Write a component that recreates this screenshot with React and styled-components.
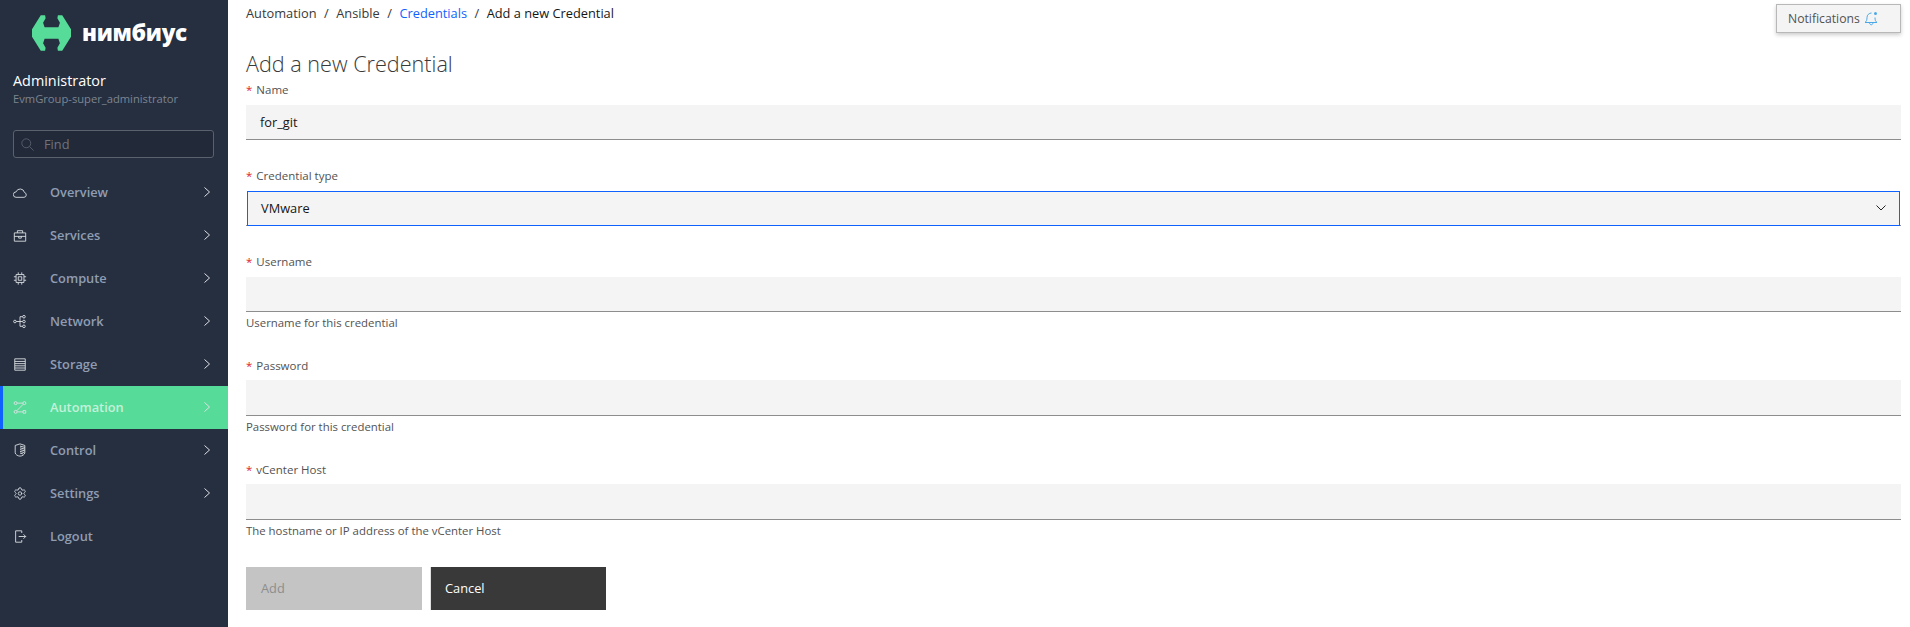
import styled, { createGlobalStyle } from 'styled-components';
import { Settings } from 'lucide-react';

const GlobalStyle = createGlobalStyle`
  html, body {
    margin: 0;
    padding: 0;
    background: #fff;
    font-family: "Open Sans", sans-serif;
  }
`;

const Page = styled.div`
  display: flex;
  width: 100%;
  height: 627px;
  overflow: hidden;
  position: relative;
`;

const Sidebar = styled.aside`
  width: 228px;
  flex-shrink: 0;
  background: #262f40;
  display: flex;
  flex-direction: column;
`;

const Brand = styled.div`
  display: flex;
  align-items: center;
  gap: 11px;
  height: 66px;
  padding-left: 32px;
`;

const BrandName = styled.span`
  color: #fff;
  font-size: 22.5px;
  font-weight: 800;
  letter-spacing: -0.3px;
  line-height: 1;
`;

const UserBlock = styled.div`
  padding: 5px 13px 0;
`;

const UserName = styled.div`
  color: #fff;
  font-size: 14.4px;
  line-height: 20px;
`;

const UserRole = styled.div`
  color: #7d8591;
  font-size: 11.2px;
  line-height: 16px;
`;

const SearchBox = styled.div`
  margin: 23px 14px 0 13px;
  height: 28px;
  box-sizing: border-box;
  display: flex;
  align-items: center;
  gap: 10px;
  padding-left: 7px;
  border: 1px solid #5a616d;
  border-radius: 3px;
  background: #222938;
  color: #6d7480;
  font-size: 12.8px;
`;

const Nav = styled.nav`
  margin-top: 13px;
  display: flex;
  flex-direction: column;
`;

const NavRow = styled.div`
  height: 43px;
  display: flex;
  align-items: center;
  box-sizing: border-box;
  padding-left: ${(p) => (p.$active ? '10px' : '13px')};
  padding-right: 18px;
  padding-bottom: 1px;
  border-left: ${(p) => (p.$active ? '3px solid #0f62fe' : 'none')};
  background: ${(p) => (p.$active ? '#57db98' : 'transparent')};
  color: ${(p) => (p.$active ? '#c3f1d9' : '#8f9db3')};
  font-size: 12.8px;
  font-weight: 600;
`;

const NavIcon = styled.span`
  width: 14px;
  height: 16px;
  display: flex;
  align-items: center;
  justify-content: center;
  color: #dfe2e6;
  margin-right: 23px;
`;

const NavLabel = styled.span`
  flex: 1;
`;

const Chevron = styled.svg`
  width: 6px;
  height: 10px;
  fill: none;
  stroke: #dfe2e6;
  stroke-width: 1;
`;

const Main = styled.main`
  flex: 1;
  min-width: 0;
  padding: 0 9px 0 18px;
`;

const Breadcrumb = styled.div`
  display: flex;
  align-items: center;
  height: 26px;
  font-size: 12.8px;
  color: #393939;
`;

const Crumb = styled.span`
  color: ${(p) => (p.$link ? '#0f62fe' : p.$current ? '#161616' : '#393939')};
`;

const Slash = styled.span`
  margin: 0 7.5px;
  color: #393939;
`;

const Title = styled.h1`
  margin: 24px 0 0;
  font-size: 21.6px;
  font-weight: 300;
  line-height: 28px;
  color: #393939;
`;

const Field = styled.div`
  margin-top: ${(p) => p.$gap || 0}px;
`;

const Label = styled.div`
  font-size: 11.5px;
  line-height: 16px;
  height: 16px;
  color: #525252;
  margin-bottom: ${(p) => (p.$tall ? '6px' : '7px')};
`;

const Star = styled.span`
  color: #da1e28;
  margin-right: 4px;
`;

const Input = styled.div`
  height: ${(p) => (p.$tall ? '36px' : '35px')};
  box-sizing: border-box;
  background: #f4f4f4;
  border-bottom: 1px solid #8d8d8d;
  padding-left: 14px;
  font-size: 12.8px;
  line-height: 34px;
  color: #161616;
`;

const SelectWrap = styled.div`
  height: 35px;
  box-sizing: border-box;
  border-bottom: 1px solid #8d8d8d;
`;

const Select = styled.div`
  height: 35px;
  box-sizing: border-box;
  margin: 0 1px;
  background: #f4f4f4;
  border: 1px solid #0f62fe;
  padding: 0 13px 2px;
  display: flex;
  align-items: center;
  justify-content: space-between;
  font-size: 12.8px;
  color: #161616;
`;

const Helper = styled.div`
  font-size: 11.4px;
  line-height: 14px;
  height: 14px;
  margin-top: 4px;
  color: #525252;
`;

const Actions = styled.div`
  display: flex;
  gap: 8px;
  margin-top: 29px;
`;

const Button = styled.div`
  width: 176px;
  height: 43px;
  padding-left: ${(p) => (p.$disabled ? '15px' : '14px')};
  padding-bottom: 1px;
  box-sizing: border-box;
  display: flex;
  align-items: center;
  font-size: 12.8px;
  background: ${(p) => (p.$disabled ? '#c4c4c4' : '#393939')};
  color: ${(p) => (p.$disabled ? '#8d8d8d' : '#fff')};
  border-left: ${(p) => (p.$disabled ? 'none' : '1px solid #e0e0e0')};
`;

const Notifications = styled.div`
  position: absolute;
  top: 4px;
  right: 9px;
  width: 125px;
  height: 29px;
  box-sizing: border-box;
  border: 1px solid #b8b8b8;
  background: #f4f4f4;
  box-shadow: 0 2px 4px rgba(0, 0, 0, 0.2);
  display: flex;
  align-items: center;
  gap: 4px;
  padding-left: 11px;
  font-size: 12.2px;
  color: #525252;
`;

const Logo = () => (
  <svg width="39" height="36" viewBox="0 0 38.7 35.3">
    <path
      fill="#57db98"
      d="M0 14 8.7 0H13l.5 3L11 7.5 12.5 12h13.7l1.5-4.500L25.200 3l.5-3H30l8.700 14v7.300L30 35.300h-4.300l-.5-3 2.500-4.500-1.500-4.500H12.500L11 27.800l2.500 4.500-.5 3H8.700L0 21.300z"
    />
  </svg>
);

const Stroke = ({ children, size = 15 }) => (
  <svg width={size} height={size} viewBox="0 0 16 16" fill="none" stroke="currentColor" strokeWidth="1">
    {children}
  </svg>
);

const icons = {
  cloud: (
    <Stroke>
      <path d="M3.5 13.5h9a2.800 2.800 0 0 0 .6-5.500A5 5 0 0 0 3.500 7.300a3.100 3.100 0 0 0 0 6.200z" />
    </Stroke>
  ),
  briefcase: (
    <Stroke>
      <path d="M1.5 5h13v9.500h-13zM1.5 9h13M5 5V2.500h6V5M6.500 9v2h3V9" />
    </Stroke>
  ),
  chip: (
    <Stroke>
      <path d="M3.5 3.500h9v9h-9zM6 6h4v4H6zM6 1v2.500M10 1v2.500M6 12.500V15M10 12.500V15M1 6h2.500M1 10h2.500M12.500 6H15M12.500 10H15" />
    </Stroke>
  ),
  network: (
    <Stroke>
      <circle cx="2.2" cy="8" r="1.5" />
      <circle cx="12.5" cy="2.5" r="1.5" />
      <circle cx="12.5" cy="8" r="1.5" />
      <circle cx="12.5" cy="13.5" r="1.5" />
      <path d="M3.7 8H11M8 2.500v11M8 2.500h3M8 13.500h3" />
    </Stroke>
  ),
  storage: (
    <Stroke>
      <path d="M2 1.5h12v13H2zM2 4.500h12M2 7h12M2 9.500h12M2 12h12" />
    </Stroke>
  ),
  automation: (
    <Stroke>
      <circle cx="3" cy="3" r="1.7" />
      <circle cx="13" cy="3" r="1.7" />
      <circle cx="3" cy="13" r="1.7" />
      <path d="M4.7 3h6.600M4.700 13h6.600M4.200 11.800l7.600-7.600M11.500 11.500h3v3h-3z" />
    </Stroke>
  ),
  control: (
    <Stroke size={16}>
      <path d="M8 1 13.500 2.800v8.400c0 1.800-3 3.800-5.500 3.800s-5.500-2-5.500-3.800V2.800zM8 3.500l5.500 1.500M8 5.500l5.500 1.500M8 7.500l5.500 1.500M8 9.500l5 1.500M8 11.500l3.500 1" />
    </Stroke>
  ),
  settings: <Settings size={15} strokeWidth={1.4} />,
  logout: (
    <Stroke>
      <path d="M10 4V1.500H3v13h7V12M6.500 8h8M12 5.500 14.500 8 12 10.500" />
    </Stroke>
  ),
};

const navItems = [
  { label: 'Overview', icon: 'cloud', arrow: true },
  { label: 'Services', icon: 'briefcase', arrow: true },
  { label: 'Compute', icon: 'chip', arrow: true },
  { label: 'Network', icon: 'network', arrow: true },
  { label: 'Storage', icon: 'storage', arrow: true },
  { label: 'Automation', icon: 'automation', arrow: true, active: true },
  { label: 'Control', icon: 'control', arrow: true },
  { label: 'Settings', icon: 'settings', arrow: true },
  { label: 'Logout', icon: 'logout' },
];

const TextField = ({ label, value, helper, gap, tall }) => (
  <Field $gap={gap}>
    <Label $tall={tall}><Star>*</Star>{label}</Label>
    <Input $tall={tall}>{value}</Input>
    {helper && <Helper>{helper}</Helper>}
  </Field>
);

export default function App() {
  return (
    <>
      <GlobalStyle />
      <Page>
        <Sidebar>
          <Brand>
            <Logo />
            <BrandName>нимбиус</BrandName>
          </Brand>
          <UserBlock>
            <UserName>Administrator</UserName>
            <UserRole>EvmGroup-super_administrator</UserRole>
          </UserBlock>
          <SearchBox>
            <svg width="13" height="13" viewBox="0 0 16 16" fill="none" stroke="#5f6672" strokeWidth="1">
              <circle cx="6.5" cy="6.5" r="5.5" />
              <path d="M10.5 10.500l5 5" />
            </svg>
            Find
          </SearchBox>
          <Nav>
            {navItems.map((item) => (
              <NavRow key={item.label} $active={item.active}>
                <NavIcon>{icons[item.icon]}</NavIcon>
                <NavLabel>{item.label}</NavLabel>
                {item.arrow && (
                  <Chevron viewBox="0 0 6 10"><path d="M0.5 0.5 5.5 5 0.5 9.5" /></Chevron>
                )}
              </NavRow>
            ))}
          </Nav>
        </Sidebar>
        <Main>
          <Breadcrumb>
            <Crumb>Automation</Crumb>
            <Slash>/</Slash>
            <Crumb>Ansible</Crumb>
            <Slash>/</Slash>
            <Crumb $link>Credentials</Crumb>
            <Slash>/</Slash>
            <Crumb $current>Add a new Credential</Crumb>
          </Breadcrumb>
          <Title>Add a new Credential</Title>
          <TextField label="Name" value="for_git" gap={4} />
          <Field $gap={28}>
            <Label><Star>*</Star>Credential type</Label>
            <SelectWrap>
              <Select>
                VMware
                <svg width="10" height="6" viewBox="0 0 10 6" fill="none" stroke="#262626" strokeWidth="1">
                  <path d="M0.5 0.5 5 5 9.5 0.5" />
                </svg>
              </Select>
            </SelectWrap>
          </Field>
          <TextField label="Username" helper="Username for this credential" gap={28} />
          <TextField label="Password" helper="Password for this credential" gap={28} tall />
          <TextField label="vCenter Host" helper="The hostname or IP address of the vCenter Host" gap={28} tall />
          <Actions>
            <Button $disabled>Add</Button>
            <Button>Cancel</Button>
          </Actions>
        </Main>
        <Notifications>
          Notifications
          <svg width="14" height="15" viewBox="0 0 14 15" fill="none" stroke="#4ba8e8" strokeWidth="1">
            <path d="M1 11.5c1.500-1 2-2.500 2-5C3 4 5 2 7.500 2M11 6.500c0 2.500.5 4 2 5H1M5.500 11.500c0 3 3.500 3 3.500 0" />
            <circle cx="11.5" cy="2.5" r="1.5" fill="#4ba8e8" stroke="none" />
          </svg>
        </Notifications>
      </Page>
    </>
  );
}
